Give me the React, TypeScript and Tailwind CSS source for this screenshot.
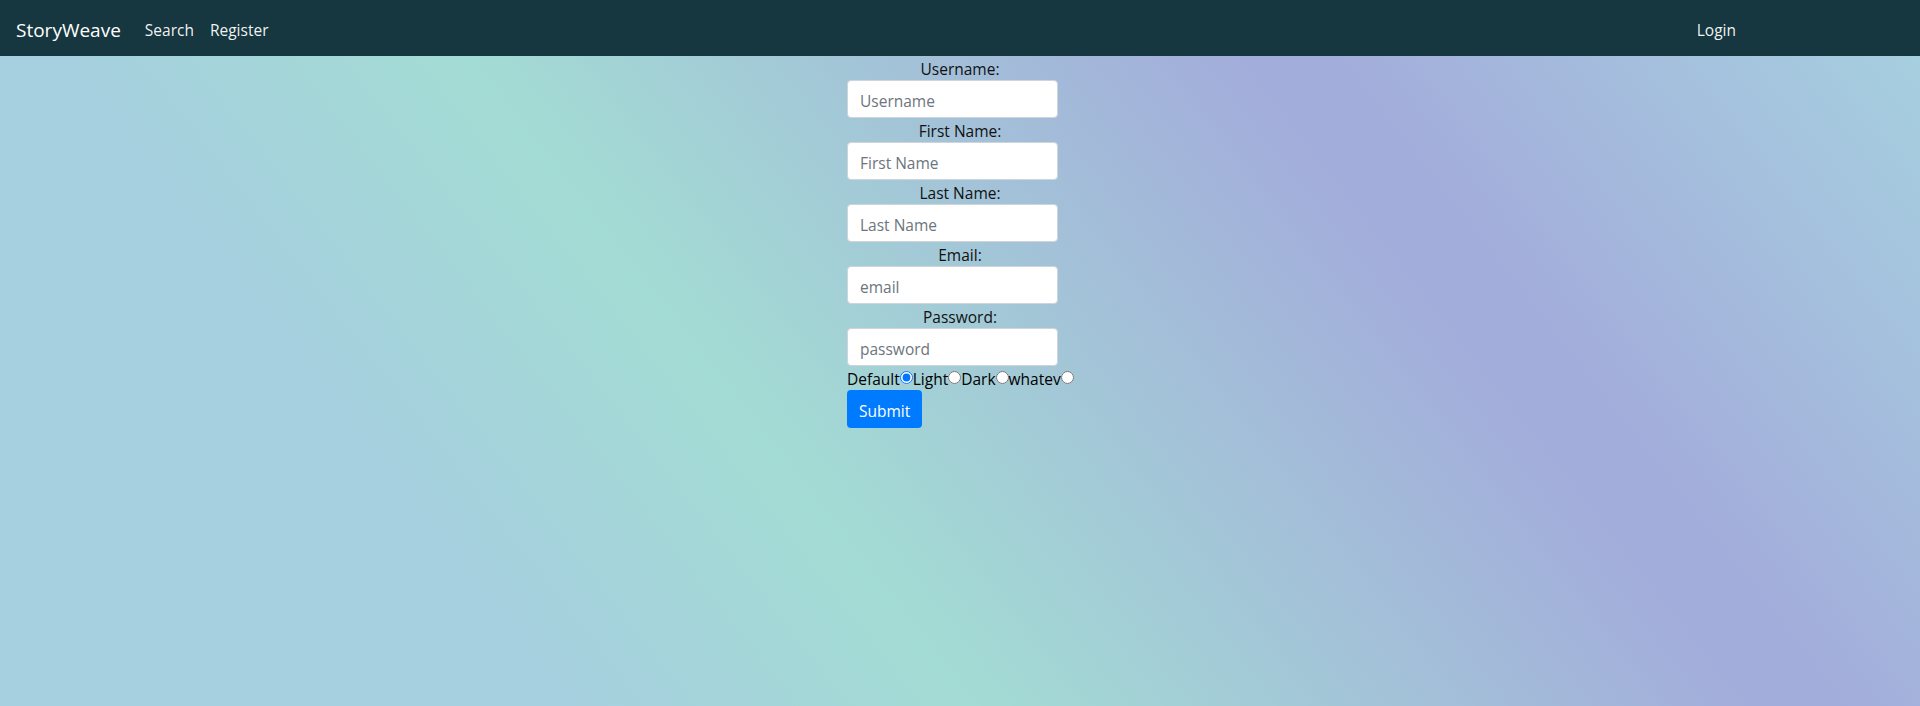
import React, { useState } from "react";

const font = { fontFamily: '"Open Sans", "Noto Sans", sans-serif' };

function Field({ label, placeholder, type = "text" }: { label: string; placeholder: string; type?: string }) {
  return (
    <>
      <label className="block h-6 pt-[3px] text-center text-[15.5px] leading-[21px] text-[#111]">{label}</label>
      <input
        type={type}
        placeholder={placeholder}
        className="block h-[38px] w-[211px] rounded border border-[#ced4da] bg-white px-3 pt-[3px] pb-0 text-[15.5px] text-[#495057] placeholder:text-[#6c757d] outline-none"
      />
    </>
  );
}

export default function App() {
  const [theme, setTheme] = useState("default");
  const themes = [
    ["default", "Default"],
    ["light", "Light"],
    ["dark", "Dark"],
    ["whatev", "whatev"],
  ];
  return (
    <div className="flex min-h-screen flex-col" style={font}>
      <nav className="flex h-14 items-center bg-[#173740] px-4 pt-[4px]">
        <span className="mr-4 text-[19px] leading-[30px] text-white">StoryWeave</span>
        <a className="px-2 py-2 text-[15.5px] leading-6 text-white/95">Search</a>
        <a className="px-2 py-2 text-[15.5px] leading-6 text-white/95">Register</a>
        <a className="ml-auto mr-[160px] px-2 py-2 text-[15.5px] leading-6 text-white/95">Login</a>
      </nav>
      <main className="flex-1 bg-[linear-gradient(52deg,#a6cfdf_0%,#a6cfdf_23%,#a3dcd4_40%,#a3addb_72%,#a3addb_76%,#a6cfdf_100%)]">
        <form className="mx-auto w-[226px]" onSubmit={(e) => e.preventDefault()}>
          <Field label="Username:" placeholder="Username" />
          <Field label="First Name:" placeholder="First Name" />
          <Field label="Last Name:" placeholder="Last Name" />
          <Field label="Email:" placeholder="email" type="email" />
          <Field label="Password:" placeholder="password" type="password" />
          <div className="flex h-6 items-center pt-[2px] text-[15.5px] leading-6 text-black">
            {themes.map(([v, l]) => (
              <label key={v} className="flex items-center">
                {l}
                <input
                  type="radio"
                  name="theme"
                  value={v}
                  checked={theme === v}
                  onChange={() => setTheme(v)}
                  className="m-0 -mt-[3px] h-[13px] w-[13px]"
                />
              </label>
            ))}
          </div>
          <button
            type="submit"
            className="h-[38px] rounded bg-[#007bff] px-3 pt-[3px] text-[15.5px] leading-6 text-white"
          >
            Submit
          </button>
        </form>
      </main>
    </div>
  );
}
